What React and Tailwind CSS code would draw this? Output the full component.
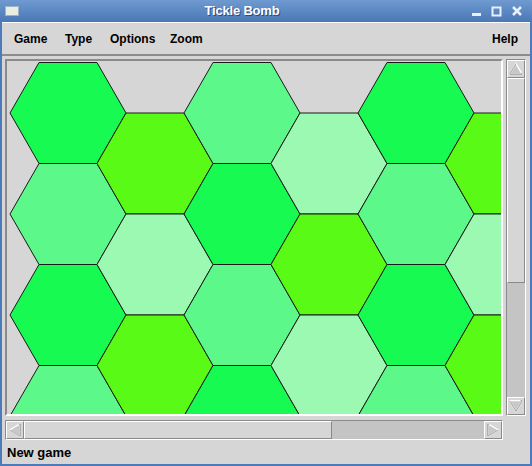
const BRIGHT = "#16fa52";
const LIME = "#58fa16";
const MED = "#5cf98a";
const LIGHT = "#9bf9b2";

// color per column, per row
const cols = [
  [BRIGHT, MED, BRIGHT, MED],
  [LIME, LIGHT, LIME],
  [MED, BRIGHT, MED, BRIGHT],
  [LIGHT, LIME, LIGHT],
  [BRIGHT, MED, BRIGHT, MED],
  [LIME, LIGHT, LIME],
];

function hexPoints(cx, top) {
  const s = 58;
  const h = 101;
  const pts = [
    [cx - s / 2, top],
    [cx + s / 2, top],
    [cx + s, top + h / 2],
    [cx + s / 2, top + h],
    [cx - s / 2, top + h],
    [cx - s, top + h / 2],
  ];
  return pts.map((p) => p.join(",")).join(" ");
}

function Board() {
  const hexes = [];
  cols.forEach((col, c) => {
    col.forEach((color, r) => {
      const cx = 61 + 87 * c;
      const top = 1.5 + (c % 2 ? 50.5 : 0) + 101 * r;
      hexes.push(
        <polygon
          key={c + "-" + r}
          points={hexPoints(cx, top)}
          fill={color}
          stroke="#1a1a1a"
          strokeWidth="1"
        />
      );
    });
  });
  return (
    <svg width="494" height="355" className="block">
      {hexes}
    </svg>
  );
}

function ArrowBtn({ dir }) {
  const paths = {
    up: "M9 3 L16 15 L2 15 Z",
    down: "M2 3 L16 3 L9 15 Z",
    left: "M3 9 L15 2 L15 16 Z",
    right: "M15 9 L3 2 L3 16 Z",
  };
  return (
    <div className="w-[18px] h-[18px] bg-[#d6d6d6] border border-t-white border-l-white border-r-[#8a8a8a] border-b-[#8a8a8a] flex items-center justify-center shrink-0">
      <svg width="16" height="16" viewBox="0 0 18 18">
        <path d={paths[dir]} fill="#c8c8c8" stroke="white" strokeWidth="1.5" />
        <path d={paths[dir]} fill="none" stroke="#7a7a7a" strokeWidth="0.8" strokeDasharray="0 12 40" />
      </svg>
    </div>
  );
}

export default function App() {
  return (
    <div
      className="w-[532px] h-[466px] bg-[#4d7ab8] flex flex-col overflow-hidden"
      style={{ fontFamily: '"Liberation Sans", Arial, sans-serif' }}
    >
      {/* title bar */}
      <div className="h-[22px] bg-gradient-to-b from-[#6f9ad0] to-[#4a78b6] flex items-center px-[5px] shrink-0">
        <div className="w-[14px] h-[10px] bg-[#e8eee0] border border-[#9fb0c8]" />
        <div className="flex-1 text-center text-white font-bold text-[13px] tracking-[-0.2px] [text-shadow:1px_1px_0_#2b4a7a] pr-[6px]">
          Tickle Bomb
        </div>
        <div className="flex items-center gap-[9px] pr-[4px]">
          <svg width="11" height="11" viewBox="0 0 11 11">
            <rect x="1" y="7" width="9" height="3" fill="#e8f0fb" />
          </svg>
          <svg width="11" height="11" viewBox="0 0 11 11">
            <rect x="1.5" y="1.5" width="8" height="8" fill="none" stroke="#e8f0fb" strokeWidth="2" />
          </svg>
          <svg width="12" height="12" viewBox="0 0 12 12">
            <path d="M2 2 L10 10 M10 2 L2 10" stroke="#e8f0fb" strokeWidth="2.5" />
          </svg>
        </div>
      </div>

      {/* body */}
      <div className="flex-1 mx-[2px] mb-[2px] bg-[#d6d6d6] flex flex-col">
        {/* menu */}
        <div className="h-[34px] flex items-center px-[12px] text-[12px] font-bold text-black border-t border-t-white border-b-2 border-b-[#8c8c8c] shrink-0">
          <span className="w-[51px]">Game</span>
          <span className="w-[45px]">Type</span>
          <span className="w-[60px]">Options</span>
          <span>Zoom</span>
          <span className="ml-auto">Help</span>
        </div>

        {/* scrolled window */}
        <div className="mt-[3px] ml-[3px] mr-[3px] flex flex-col">
          <div className="flex">
            <div className="border-2 border-t-[#8a8a8a] border-l-[#8a8a8a] border-r-white border-b-white w-[498px] h-[357px] overflow-hidden bg-[#d6d6d6]">
              <Board />
            </div>
            <div className="ml-[3px] w-[20px] h-[357px] bg-[#c4c4c4] border border-t-[#8a8a8a] border-l-[#8a8a8a] border-r-white border-b-white flex flex-col">
              <ArrowBtn dir="up" />
              <div className="h-[205px] bg-[#d6d6d6] border border-t-white border-l-white border-r-[#8a8a8a] border-b-[#8a8a8a]" />
              <div className="flex-1" />
              <ArrowBtn dir="down" />
            </div>
          </div>
          <div className="mt-[4px] w-[498px] h-[20px] bg-[#c4c4c4] border border-t-[#8a8a8a] border-l-[#8a8a8a] border-r-white border-b-white flex">
            <ArrowBtn dir="left" />
            <div className="w-[308px] bg-[#d6d6d6] border border-t-white border-l-white border-r-[#8a8a8a] border-b-[#8a8a8a]" />
            <div className="flex-1" />
            <ArrowBtn dir="right" />
          </div>
        </div>

        {/* status */}
        <div className="flex-1 flex items-center px-[5px] text-[13px] font-bold text-black pt-[2px]">
          New game
        </div>
      </div>
    </div>
  );
}
